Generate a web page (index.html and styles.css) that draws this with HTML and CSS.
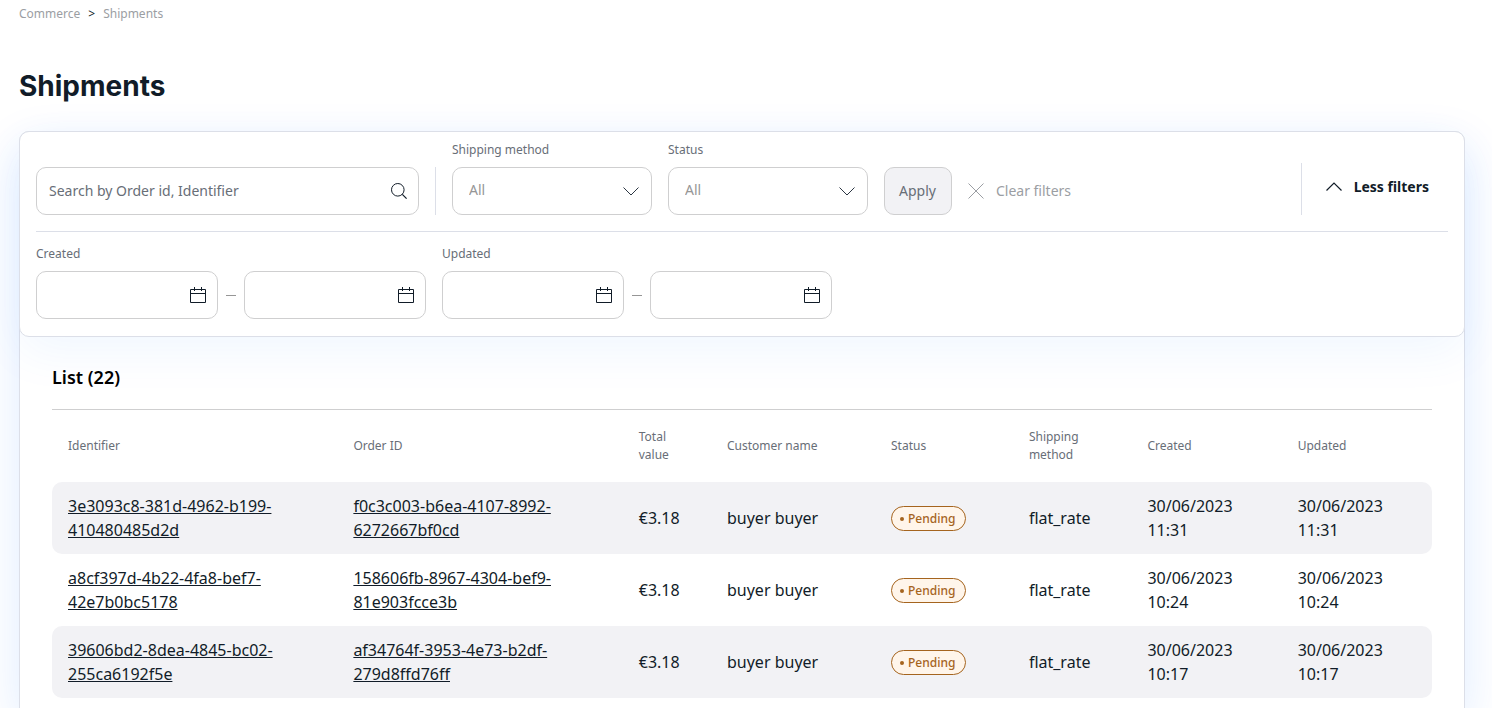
FILE: index.html
```html
<!DOCTYPE html>
<html lang="en">
<head>
<meta charset="utf-8">
<title>Shipments</title>
<meta name="viewport" content="width=device-width, initial-scale=1">
<link rel="stylesheet" href="styles.css">
</head>
<body>
<svg class="sprite" aria-hidden="true">
  <symbol id="calendar" viewBox="0 0 16 16"><path d="M.5 2.500h15v13H.5zM.5 6.500h15M4.500 0v4M11.500 0v4" fill="none" stroke="currentColor"/></symbol>
  <symbol id="down" viewBox="0 0 16 16"><path d="M.5 4.500 8 12l7.500-7.500" fill="none" stroke="currentColor"/></symbol>
</svg>
<main class="page">
  <nav class="breadcrumb" aria-label="Breadcrumb">
    <a href="#">Commerce</a><span class="breadcrumb-sep">&gt;</span><a href="#">Shipments</a>
  </nav>
  <h1 class="title">Shipments</h1>
  <div class="card">
    <form class="filters">
      <div class="filters-row filters-main">
        <div class="search">
          <input class="control" type="text" placeholder="Search by Order id, Identifier" aria-label="Search by Order id, Identifier">
          <svg class="control-icon" viewBox="0 0 16 16"><circle cx="6.800" cy="6.800" r="6.300" fill="none" stroke="currentColor"/><path d="m11.300 11.300 4.300 4.300" fill="none" stroke="currentColor" stroke-width="1.200"/></svg>
        </div>
        <span class="divider"></span>
        <div class="field">
          <label class="label" for="method">Shipping method</label>
          <div class="select">
            <select class="control" id="method"><option>All</option></select>
            <svg class="control-icon select-icon"><use href="#down"/></svg>
          </div>
        </div>
        <div class="field">
          <label class="label" for="status">Status</label>
          <div class="select">
            <select class="control" id="status"><option>All</option></select>
            <svg class="control-icon select-icon"><use href="#down"/></svg>
          </div>
        </div>
        <button class="apply" type="submit">Apply</button>
        <button class="clear" type="reset">
          <svg class="icon" viewBox="0 0 16 16"><path d="m.5.5 15 15M15.500.5l-15 15" fill="none" stroke="currentColor"/></svg>
          Clear filters
        </button>
        <button class="toggle" type="button">
          <svg class="icon" viewBox="0 0 16 16"><path d="M.5 11.500 8 4l7.500 7.500" fill="none" stroke="currentColor" stroke-width="1.200"/></svg>
          Less filters
        </button>
      </div>
      <div class="filters-row filters-dates">
        <div class="field">
          <label class="label" for="created-from">Created</label>
          <div class="range">
            <div class="date"><input class="control" id="created-from" type="text"><svg class="control-icon"><use href="#calendar"/></svg></div>
            <span class="dash"></span>
            <div class="date"><input class="control" type="text" aria-label="Created to"><svg class="control-icon"><use href="#calendar"/></svg></div>
          </div>
        </div>
        <div class="field">
          <label class="label" for="updated-from">Updated</label>
          <div class="range">
            <div class="date"><input class="control" id="updated-from" type="text"><svg class="control-icon"><use href="#calendar"/></svg></div>
            <span class="dash"></span>
            <div class="date"><input class="control" type="text" aria-label="Updated to"><svg class="control-icon"><use href="#calendar"/></svg></div>
          </div>
        </div>
      </div>
    </form>
    <section class="list">
      <h2 class="list-title">List (22)</h2>
      <table class="table">
        <colgroup>
          <col class="col-id"><col class="col-id"><col class="col-total"><col class="col-customer"><col class="col-status"><col class="col-method"><col class="col-date"><col class="col-date">
        </colgroup>
        <thead>
          <tr><th>Identifier</th><th>Order ID</th><th>Total value</th><th>Customer name</th><th>Status</th><th>Shipping method</th><th>Created</th><th>Updated</th></tr>
        </thead>
        <tbody>
          <tr>
            <td><a href="#">3e3093c8-381d-4962-b199-410480485d2d</a></td>
            <td><a href="#">f0c3c003-b6ea-4107-8992-6272667bf0cd</a></td>
            <td>€3.18</td><td>buyer buyer</td><td><span class="badge">Pending</span></td><td>flat_rate</td>
            <td>30/06/2023 11:31</td><td>30/06/2023 11:31</td>
          </tr>
          <tr>
            <td><a href="#">a8cf397d-4b22-4fa8-bef7-42e7b0bc5178</a></td>
            <td><a href="#">158606fb-8967-4304-bef9-81e903fcce3b</a></td>
            <td>€3.18</td><td>buyer buyer</td><td><span class="badge">Pending</span></td><td>flat_rate</td>
            <td>30/06/2023 10:24</td><td>30/06/2023 10:24</td>
          </tr>
          <tr>
            <td><a href="#">39606bd2-8dea-4845-bc02-255ca6192f5e</a></td>
            <td><a href="#">af34764f-3953-4e73-b2df-279d8ffd76ff</a></td>
            <td>€3.18</td><td>buyer buyer</td><td><span class="badge">Pending</span></td><td>flat_rate</td>
            <td>30/06/2023 10:17</td><td>30/06/2023 10:17</td>
          </tr>
        </tbody>
      </table>
    </section>
  </div>
</main>
</body>
</html>
```
FILE: styles.css
```css
*, *::before, *::after { box-sizing: border-box; }

body {
  margin: 0;
  background: #fff;
  color: #111c28;
  font: 16px/24px "Noto Sans", sans-serif;
}

a { color: inherit; }
button, input, select { font: inherit; color: inherit; }
.sprite { display: none; }

.page { padding: 5px 27px 0 19px; }

.breadcrumb {
  display: flex;
  gap: 8px;
  font-size: 12px;
  line-height: 18px;
  color: #9b9ea3;
}
.breadcrumb a { text-decoration: none; }
.breadcrumb-sep { color: #111c28; }

.title {
  margin: 43px 0 25px;
  font: 700 28px/40px Inter, sans-serif;
}

.card {
  border: 1px solid #dcdfe8;
  border-bottom: 0;
  border-radius: 10px 10px 0 0;
  box-shadow: 0 16px 48px rgba(0, 112, 255, 0.13);
}

.filters {
  margin: -1px;
  padding: 8px 16px 17px;
  background: #fff;
  border: 1px solid #dcdfe8;
  border-radius: 10px;
  box-shadow: 0 16px 48px rgba(0, 112, 255, 0.06);
}
.filters-row { display: flex; align-items: flex-end; gap: 16px; }
.filters-main { padding-bottom: 16px; border-bottom: 1px solid #dcdfe8; }
.filters-dates { padding-top: 12px; }

.label {
  display: block;
  margin-bottom: 8px;
  font-size: 12px;
  line-height: 19px;
  color: #686e77;
}

.search, .select, .date { position: relative; }
.search { flex: 0 1 383px; }
.select { width: 200px; }
.date { width: 182px; }

.control {
  display: block;
  width: 100%;
  height: 48px;
  padding: 0 44px 2px 12px;
  border: 1px solid #cfcfd0;
  border-radius: 10px;
  background: #fff;
  font-size: 14px;
  appearance: none;
}
.control::placeholder { color: #686e77; opacity: 1; }
.select .control { padding: 0 40px 2px 16px; color: #969696; }
.control-icon {
  position: absolute;
  top: 16px;
  right: 12px;
  width: 16px;
  height: 16px;
  pointer-events: none;
}
.select-icon { right: 13px; color: #2c3643; }

.divider { width: 1px; height: 48px; background: #dcdfe8; }

.apply, .clear, .toggle { font-size: 14px; cursor: pointer; }
.apply {
  height: 48px;
  padding: 0 15px 0 14px;
  border: 1px solid #cfcfd0;
  border-radius: 10px;
  background: #f2f2f5;
  color: #686e77;
}
.clear, .toggle { display: flex; align-items: center; gap: 12px; border: 0; background: none; }
.clear { height: 48px; padding: 0; color: #9b9ea3; }
.toggle {
  height: 52px;
  margin-left: auto;
  padding: 0 19px 4px 24px;
  border-left: 1px solid #dcdfe8;
  font-weight: 700;
}
.icon { width: 16px; height: 16px; }

.range { display: flex; align-items: center; gap: 8px; }
.dash { width: 10px; height: 1px; background: #969696; }

.list { padding: 29px 32px 0; }
.list-title {
  margin: 0;
  padding-bottom: 20px;
  border-bottom: 1px solid #cfcfd0;
  color: #000;
  font-size: 18px;
  font-weight: 600;
  line-height: 24px;
}

.table { width: 100%; padding-bottom: 10px; table-layout: fixed; border-collapse: separate; border-spacing: 0; }
.col-id { width: 20.7%; }
.col-total { width: 6.4%; }
.col-customer { width: 11.9%; }
.col-status { width: 10%; }
.col-method { width: 8.6%; }
.col-date { width: 10.9%; }

.table th {
  height: 72px;
  padding: 0 16px;
  text-align: left;
  color: #686e77;
  font-size: 12px;
  font-weight: 400;
  line-height: 18px;
}
.table td { padding: 12px 16px; }
.table tbody tr:nth-child(odd) td { background: #f2f2f5; }
.table td:first-child { border-radius: 10px 0 0 10px; }
.table td:last-child { border-radius: 0 10px 10px 0; }

.badge {
  display: inline-flex;
  align-items: center;
  gap: 4px;
  height: 25px;
  padding: 0 10px 0 8px;
  border: 1px solid #a5641e;
  border-radius: 13px;
  background: #fff5ea;
  color: #a5641e;
  font-size: 12px;
  font-weight: 500;
  vertical-align: middle;
}
.badge::before { content: ""; width: 4px; height: 4px; border-radius: 50%; background: currentColor; }
```
